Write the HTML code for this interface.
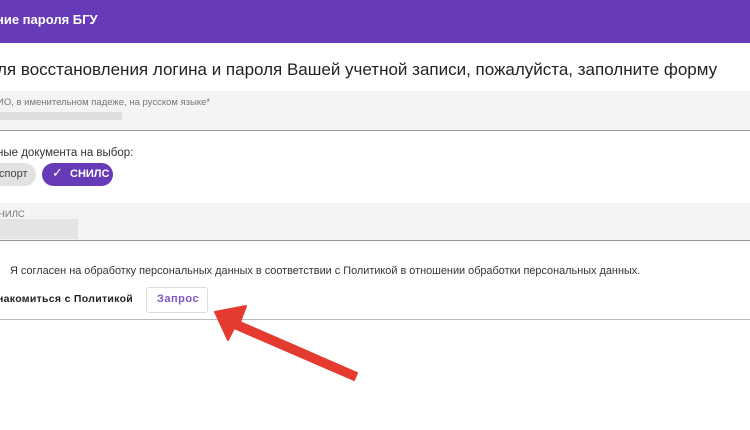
<!DOCTYPE html>
<html><head><meta charset="utf-8"><style>
body{margin:0;width:750px;height:430px;background:#fff;font-family:"Liberation Sans",Arial,sans-serif;position:relative;overflow:hidden;color:#222}
.a{position:absolute;white-space:nowrap}
</style></head><body>
<div class="a" style="left:0;top:0;width:750px;height:43px;background:#673ab7"></div>
<div class="a" style="left:-4px;top:12px;color:#fff;font-size:13px;font-weight:bold">ние пароля БГУ</div>
<div class="a" style="left:-3px;top:60px;font-size:17px;color:#222">ля восстановления логина и пароля Вашей учетной записи, пожалуйста, заполните форму</div>
<div class="a" style="left:0;top:91px;width:750px;height:39px;background:#f4f4f4;border-bottom:1px solid #999"></div>
<div class="a" style="left:-3px;top:97px;font-size:9.5px;color:#777">ИО, в именительном падеже, на русском языке*</div>
<div class="a" style="left:0;top:112px;width:122px;height:8px;background:#ddd"></div>
<div class="a" style="left:-3px;top:147px;font-size:11.5px;color:#333">ные документа на выбор:</div>
<div class="a" style="left:-10px;top:163px;width:46px;height:23px;border-radius:12px;background:#e2e2e2"></div>
<div class="a" style="left:-1px;top:168px;font-size:11px;color:#444">спорт</div>
<div class="a" style="left:42px;top:163px;width:71px;height:23px;border-radius:12px;background:#673ab7"></div>
<div class="a" style="left:52px;top:165px;color:#fff;font-size:13px">✓</div>
<div class="a" style="left:70px;top:168px;color:#fff;font-size:11px;font-weight:bold">СНИЛС</div>
<div class="a" style="left:0;top:203px;width:750px;height:37px;background:#f4f4f4;border-bottom:1px solid #999"></div>
<div class="a" style="left:-2px;top:209px;font-size:9.5px;color:#777">НИЛС</div>
<div class="a" style="left:0;top:219px;width:78px;height:20px;background:#e4e4e4"></div>
<div class="a" style="left:10px;top:265px;font-size:10.9px;color:#333">Я согласен на обработку персональных данных в соответствии с Политикой в отношении обработки персональных данных.</div>
<div class="a" style="left:-3px;top:293px;font-size:10.5px;font-weight:bold;letter-spacing:.3px;color:#222">накомиться с Политикой</div>
<div class="a" style="left:146px;top:287px;width:60px;height:24px;border:1px solid #ddd;border-radius:3px"></div>
<div class="a" style="left:157px;top:293px;font-size:11px;font-weight:bold;color:#7e57c2;letter-spacing:.5px">Запрос</div>
<div class="a" style="left:0;top:319px;width:750px;height:1px;background:#bbb"></div>
<svg class="a" style="left:0;top:0" width="750" height="430"><path d="M357 373 L240 322 L246 306 L215 312 L228 340 L234 328 L354 380 Z" fill="#e53a2f" stroke="#e53a2f" stroke-width="2" stroke-linejoin="round"/></svg>
</body></html>
